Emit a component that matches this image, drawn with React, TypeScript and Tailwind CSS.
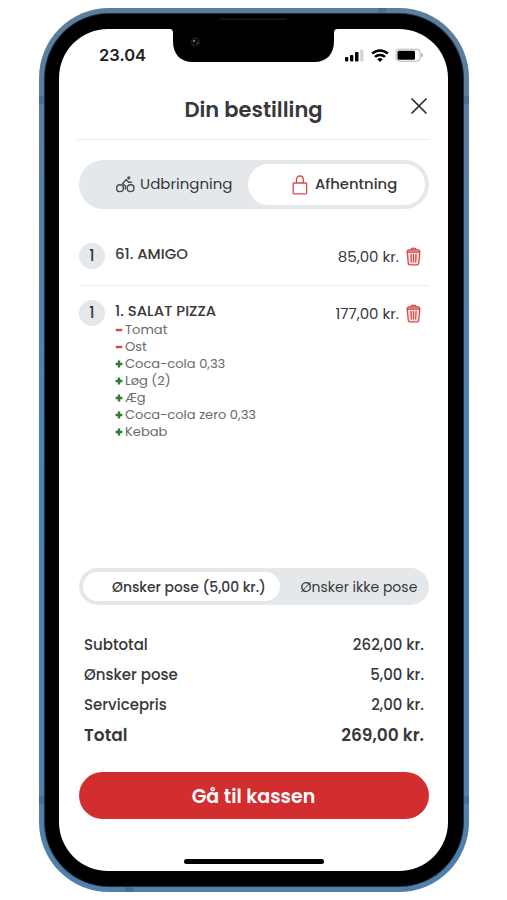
import React, { useState } from 'react';

interface Extra {
  sign: '+' | '-';
  name: string;
}

interface OrderLine {
  id: number;
  qty: number;
  title: string;
  price: string;
  extras: Extra[];
}

const lines: OrderLine[] = [
  { id: 61, qty: 1, title: '61. AMIGO', price: '85,00 kr.', extras: [] },
  {
    id: 1,
    qty: 1,
    title: '1. SALAT PIZZA',
    price: '177,00 kr.',
    extras: [
      { sign: '-', name: 'Tomat' },
      { sign: '-', name: 'Ost' },
      { sign: '+', name: 'Coca-cola 0,33' },
      { sign: '+', name: 'Løg (2)' },
      { sign: '+', name: 'Æg' },
      { sign: '+', name: 'Coca-cola zero 0,33' },
      { sign: '+', name: 'Kebab' },
    ],
  },
];

const totals = [
  { label: 'Subtotal', amount: '262,00 kr.' },
  { label: 'Ønsker pose', amount: '5,00 kr.' },
  { label: 'Servicepris', amount: '2,00 kr.' },
];

const TrashIcon = () => (
  <svg className="h-[19px] w-[15px]" viewBox="0 0 15 19" fill="none" stroke="#d9484a" strokeWidth="1.3" strokeLinecap="round">
    <path d="M1.2 5h12.600L12.700 16.400c-.1.900-.7 1.400-1.500 1.400H3.800c-.8 0-1.400-.5-1.500-1.400z" fill="#fbe3e1" />
    <path d="M5 2.800C5 1.700 5.800 1.200 7.500 1.200s2.500.5 2.500 1.600M1.200 5c.1-1.400.8-2 2-2h8.600c1.200 0 1.900.6 2 2" />
    <path d="M5 7.500l.3 7.500M7.500 7.500V15M10 7.500L9.700 15" />
  </svg>
);

const BikeIcon = () => (
  <svg className="h-[17px] w-[19px]" viewBox="0 0 19 17" fill="none" stroke="#4a4a4c" strokeWidth="1.400" strokeLinecap="round" strokeLinejoin="round">
    <circle cx="4" cy="12.200" r="3.400" />
    <circle cx="14.600" cy="12.200" r="3.400" />
    <path d="M9.400 13V10L6.600 7.500l3.800-3.900 2.300 2.700h2.900" />
    <circle cx="12.800" cy="1.800" r="0.900" />
  </svg>
);

const LockIcon = () => (
  <svg className="h-[20px] w-[16px]" viewBox="0 0 16 20" fill="none" stroke="#d9484a" strokeWidth="1.300" strokeLinejoin="round">
    <rect x="1.200" y="8" width="13.400" height="10.800" rx="0.800" />
    <path d="M4.500 8V4.500C4.500 2.500 6 1 7.900 1s3.400 1.500 3.400 3.500V8" />
  </svg>
);

const StatusIcons = () => (
  <svg className="h-4 w-[80px]" viewBox="0 0 80 16">
    <rect x="1" y="9" width="3.300" height="4.500" rx="1" fill="#000" />
    <rect x="6" y="7" width="3.300" height="6.500" rx="1" fill="#000" />
    <rect x="11" y="4" width="3.500" height="9.500" rx="1" fill="#000" />
    <rect x="16.200" y="1.500" width="3.200" height="12" rx="1" fill="#d4d4d4" />
    <g fill="none" stroke="#000" strokeWidth="2.500">
      <path d="M28.200 5.600a11.200 11.200 0 0 1 15.600 0" />
      <path d="M31 8.900a7.200 7.200 0 0 1 10 0" />
    </g>
    <path d="M33.200 11.200a4.200 4.200 0 0 1 5.600 0l-2.800 2.800z" fill="#000" />
    <rect x="52" y="1.200" width="24" height="12" rx="3" fill="none" stroke="#b5b5b5" />
    <rect x="53.500" y="2.700" width="17.500" height="9" rx="1.500" fill="#000" />
    <path d="M77.300 5v4.500c1-.3 1.600-1.200 1.600-2.250S78.300 5.300 77.300 5z" fill="#aaa" />
  </svg>
);

const Notch = () => (
  <svg className="absolute left-[108px] top-[-12px] h-[46px] w-[174px]" viewBox="0 -11 174 46">
    <path d="M0 0h174v1h-3.500c-2.500 0-3.500 1.300-3.500 4v8c0 13-7 21-20 21H26C13 34 6 26 6 13V5c0-2.700-1-4-3.500-4H0z" fill="#000" />
    <rect x="52" y="-10" width="68" height="2.500" rx="1.200" fill="#111" />
    <circle cx="28.500" cy="14" r="5" fill="#090d0f" />
    <circle cx="28.500" cy="14" r="3.800" fill="none" stroke="#1a2528" />
    <circle cx="27" cy="13" r="0.900" fill="#8da5a8" />
    <circle cx="30.500" cy="15" r="0.700" fill="#526d70" />
  </svg>
);

const App: React.FC = () => {
  const [pickup, setPickup] = useState(true);
  const [bag, setBag] = useState(true);

  return (
    <div className="flex h-[900px] w-[507px] bg-white pl-[39px] pt-2 font-['Poppins','Inter',sans-serif] text-[#38383a]">
      <div className="relative h-[884px] w-[430px] rounded-[70px] bg-gradient-to-b from-[#5d7d99] via-[#4d82b4] to-[#517fa9] p-[5px]">
        {/* Antenna bands */}
        <div className="absolute left-0 top-[88px] h-2 w-[5px] bg-[#486f96]" />
        <div className="absolute right-0 top-[88px] h-2 w-[5px] bg-[#486f96]" />
        <div className="absolute left-0 top-[788px] h-2 w-[5px] bg-[#486f96]" />
        <div className="absolute right-0 top-[788px] h-2 w-[5px] bg-[#486f96]" />
        <div className="absolute right-[83px] top-0 h-[5px] w-2 bg-[#506d90]" />
        <div className="absolute bottom-0 left-[86px] h-[5px] w-2 bg-[#496f95]" />
        <div className="h-full rounded-[65px] bg-[#172f47] p-px">
          <div className="h-full rounded-[64px] bg-black px-[14px] pb-[15px] pt-[15px]">
            <div className="relative flex h-[842px] w-[389px] flex-col rounded-[49px] bg-white pl-5 pr-[19px]">
              <Notch />

              {/* Status bar */}
              <div className="-ml-5 flex h-[53px] items-center justify-between pl-10 pr-[5px]">
                <span className="pb-px font-['Inter',sans-serif] text-[16.500px] font-semibold leading-5 text-[#202022]">23.04</span>
                <StatusIcons />
              </div>

              {/* Header */}
              <div className="relative -ml-[2px] -mr-px flex h-[58px] items-center justify-center border-b border-[#ededed] pb-[2px]">
                <h1 className="text-[21px] font-semibold leading-7">Din bestilling</h1>
                <button className="absolute right-[3px] top-4" aria-label="Luk">
                  <svg className="h-4 w-4" viewBox="0 0 16 16" stroke="#2c2c2e" strokeWidth="1.700" strokeLinecap="round">
                    <path d="M1 1l14 14M15 1L1 15" />
                  </svg>
                </button>
              </div>

              {/* Delivery / pickup */}
              <div className="mt-5 flex h-[49px] rounded-full bg-[#e5e8ea] p-1">
                <button onClick={() => setPickup(false)} className="flex w-[165px] items-center gap-[5px] pl-[33px] text-[15px]">
                  <BikeIcon />
                  <span>Udbringning</span>
                </button>
                <button onClick={() => setPickup(true)} className={`flex flex-1 items-center gap-[7px] rounded-full pl-[44px] text-[14.800px] font-medium ${pickup ? 'bg-white' : ''}`}>
                  <LockIcon />
                  <span>Afhentning</span>
                </button>
              </div>

              {/* Order lines */}
              <div className="mt-[20px] h-[339px]">
                {lines.map((line, i) => (
                  <div key={line.id} className={i > 0 ? 'flex border-t border-[#ececec] pt-[14px]' : 'flex h-[56px] pt-[14px]'}>
                    <span className="flex h-[26px] w-[26px] items-center justify-center rounded-full bg-[#e5e8ea] pt-px text-[15px] font-medium">{line.qty}</span>
                    <div className="ml-[10px] flex-1">
                      <div className="text-[14.900px] font-medium leading-[21px]">{line.title}</div>
                      {line.extras.map(extra => (
                        <div key={extra.name} className="flex h-[17px] items-center text-[13.050px] leading-[17px] text-[#6a6a6c]">
                          <svg className="mr-[2px] h-2 w-2" viewBox="0 0 8 8" strokeWidth="2.400" stroke={extra.sign === '-' ? '#d84346' : '#2c7d35'}>
                            <path d={extra.sign === '-' ? 'M.8 4h6.400' : 'M.6 4h6.800M4 .6v6.800'} />
                          </svg>
                          <span>{extra.name}</span>
                        </div>
                      ))}
                    </div>
                    <div className="flex h-[26px] items-center gap-[7px] pr-2">
                      <span className="pt-[2px] text-[15px]">{line.price}</span>
                      <TrashIcon />
                    </div>
                  </div>
                ))}
              </div>

              {/* Bag choice */}
              <div className="flex h-[37px] rounded-full bg-[#e5e8ea] p-1">
                <button onClick={() => setBag(true)} className={`w-[197px] rounded-full pl-[29px] pt-px text-left text-[13.900px] font-medium ${bag ? 'bg-white' : ''}`}>Ønsker pose (5,00 kr.)</button>
                <button onClick={() => setBag(false)} className="flex-1 pl-[20.500px] pt-px text-left text-[14px]">Ønsker ikke pose</button>
              </div>

              {/* Totals */}
              <div className="mt-[25px] px-[5px]">
                {totals.map(row => (
                  <div key={row.label} className="flex h-[30px] items-center justify-between text-[15px] font-medium">
                    <span>{row.label}</span>
                    <span>{row.amount}</span>
                  </div>
                ))}
                <div className="flex h-[32px] items-center justify-between text-[17px] font-semibold">
                  <span>Total</span>
                  <span>269,00 kr.</span>
                </div>
              </div>

              <button className="mt-5 h-[47px] rounded-full bg-[#d32e2f] pr-px pt-[3px] text-[19px] font-semibold text-white">Gå til kassen</button>

              <div className="ml-[105px] mt-[40px] h-[5px] w-[140px] rounded-full bg-black" />
            </div>
          </div>
        </div>
      </div>
    </div>
  );
};

export default App;
